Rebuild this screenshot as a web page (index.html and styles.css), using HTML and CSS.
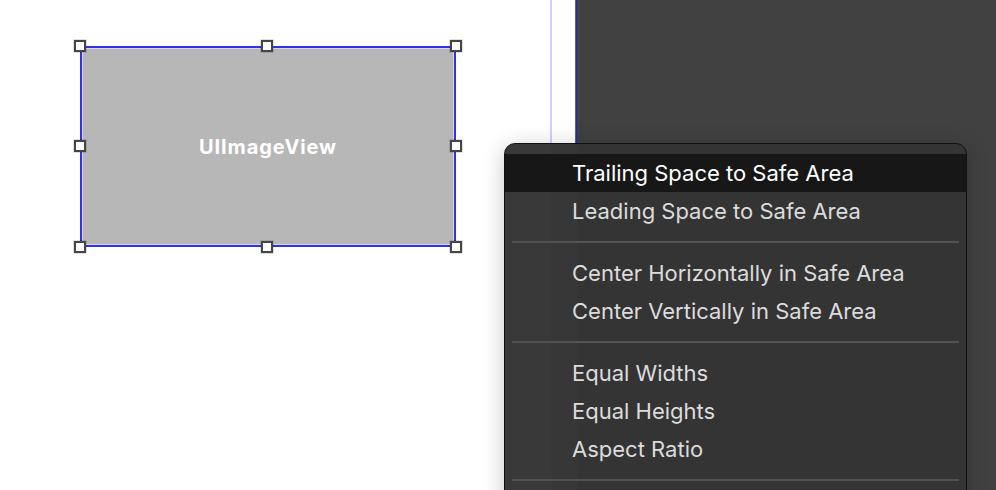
FILE: index.html
```html
<!DOCTYPE html>
<html lang="en">
<head>
<meta charset="utf-8">
<title>Interface Builder constraint menu</title>
<link rel="stylesheet" href="styles.css">
</head>
<body>
<div class="scene">
  <div class="canvas">
    <div class="image-view">
      <span class="image-label">UIImageView</span>
      <span class="handle h-tl"></span>
      <span class="handle h-tc"></span>
      <span class="handle h-tr"></span>
      <span class="handle h-ml"></span>
      <span class="handle h-mr"></span>
      <span class="handle h-bl"></span>
      <span class="handle h-bc"></span>
      <span class="handle h-br"></span>
    </div>
  </div>
  <div class="guide"></div>
  <div class="gap"></div>
  <div class="edge"></div>
  <div class="dark"></div>
</div>

<div class="menu">
  <div class="item active">Trailing Space to Safe Area</div>
  <div class="item">Leading Space to Safe Area</div>
  <div class="sep"></div>
  <div class="item">Center Horizontally in Safe Area</div>
  <div class="item">Center Vertically in Safe Area</div>
  <div class="sep"></div>
  <div class="item">Equal Widths</div>
  <div class="item">Equal Heights</div>
  <div class="item">Aspect Ratio</div>
  <div class="sep"></div>
</div>
</body>
</html>
```

FILE: styles.css
```css
html, body {
  margin: 0;
  padding: 0;
}
body {
  width: 996px;
  height: 490px;
  overflow: hidden;
  background: #ffffff;
  font-family: Inter, "Noto Sans", "Liberation Sans", sans-serif;
  position: relative;
}

.scene {
  display: flex;
  height: 490px;
}
.canvas {
  width: 550px;
  background: #ffffff;
  padding: 46px 0 0 80px;
  box-sizing: border-box;
}
.guide {
  width: 2px;
  background: #d0d0fb;
}
.gap {
  width: 23px;
  background: #ffffff;
}
.edge {
  width: 2px;
  background: linear-gradient(to right, #5252f0 0 1px, #2a2a96 1px 2px);
}
.dark {
  flex: 1;
  background: #414141;
}

.image-view {
  position: relative;
  width: 376px;
  height: 201px;
  box-sizing: border-box;
  border: 2px solid #3232e6;
  background: #b7b7b7;
  box-shadow: inset 0 0 0 1px #d6d6e8;
  display: flex;
  align-items: center;
  justify-content: center;
}
.image-label {
  color: #ffffff;
  font-weight: 700;
  font-size: 20px;
  letter-spacing: 0.9px;
  margin-top: 1px;
}
.handle {
  position: absolute;
  width: 12px;
  height: 12px;
  box-sizing: border-box;
  background: #ffffff;
  border: 2px solid #454545;
  box-shadow: 0 0 0 0.5px rgba(0, 0, 0, 0.25);
}
.h-tl { left: -8px; top: -8px; }
.h-tc { left: 179px; top: -8px; }
.h-tr { right: -8px; top: -8px; }
.h-ml { left: -8px; top: 92px; }
.h-mr { right: -8px; top: 92px; }
.h-bl { left: -8px; bottom: -8px; }
.h-bc { left: 179px; bottom: -8px; }
.h-br { right: -8px; bottom: -8px; }

.menu {
  position: absolute;
  left: 504px;
  top: 143px;
  width: 463px;
  height: 420px;
  box-sizing: border-box;
  border: 1px solid #111111;
  border-radius: 11px;
  padding-top: 10px;
  background: linear-gradient(to right, #393939 0 46px, #373737 46px 72px, #343434 72px);
  box-shadow: 0 4px 22px rgba(0, 0, 0, 0.22);
  overflow: hidden;
}
.item {
  height: 38px;
  line-height: 38px;
  padding-left: 67px;
  font-size: 22px;
  color: #dcdcdc;
  white-space: nowrap;
}
.item.active {
  background: #171717;
  color: #ffffff;
}
.sep {
  height: 2px;
  margin: 11px 7px 11px 7px;
  background: #525252;
}
```
